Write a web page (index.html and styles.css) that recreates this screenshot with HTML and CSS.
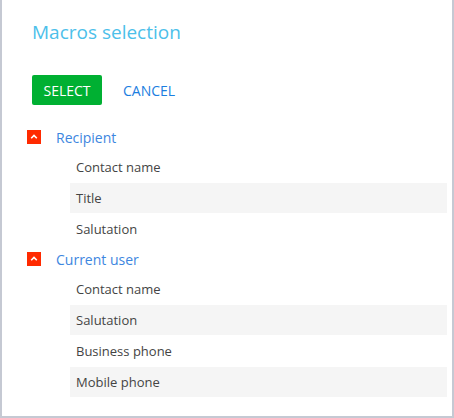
FILE: index.html
```html
<!DOCTYPE html>
<html>
<head>
<meta charset="utf-8">
<link rel="stylesheet" href="styles.css">
</head>
<body>
<div class="dialog">
  <h1 class="title">Macros selection</h1>
  <div class="actions">
    <button class="btn-select">SELECT</button>
    <button class="btn-cancel">CANCEL</button>
  </div>
  <div class="tree">
    <div class="group">
      <div class="group-head">
        <span class="toggle"><svg width="14" height="14" viewBox="0 0 14 14"><path d="M4.2 8.2 L7 5.4 L9.8 8.2" fill="none" stroke="#fff" stroke-width="1.6"/></svg></span>
        <span class="group-name">Recipient</span>
      </div>
      <div class="item">Contact name</div>
      <div class="item alt">Title</div>
      <div class="item">Salutation</div>
    </div>
    <div class="group">
      <div class="group-head">
        <span class="toggle"><svg width="14" height="14" viewBox="0 0 14 14"><path d="M4.2 8.2 L7 5.4 L9.8 8.2" fill="none" stroke="#fff" stroke-width="1.6"/></svg></span>
        <span class="group-name">Current user</span>
      </div>
      <div class="item">Contact name</div>
      <div class="item alt">Salutation</div>
      <div class="item">Business phone</div>
      <div class="item alt">Mobile phone</div>
    </div>
  </div>
</div>
</body>
</html>
```
FILE: styles.css
```css
html, body {
  margin: 0;
  padding: 0;
}
body {
  background: #c5c9d3;
  width: 454px;
  height: 418px;
  overflow: hidden;
  font-family: "Open Sans", "Liberation Sans", sans-serif;
}
.dialog {
  margin-left: 2px;
  width: 450px;
  height: 416px;
  background: #fff;
  box-sizing: border-box;
  padding: 18px 5px 0 25px;
}
.title {
  margin: 0 0 0 5px;
  font-weight: 400;
  font-size: 19px;
  line-height: 28px;
  color: #4cc0ea;
}
.actions {
  display: flex;
  align-items: center;
  margin: 29px 0 0 5px;
  gap: 21px;
}
.btn-select {
  width: 70px;
  height: 30px;
  border: 0;
  border-radius: 2px;
  background: #00b032;
  color: #fff;
  font-family: inherit;
  font-size: 14px;
  padding: 0;
}
.btn-cancel {
  border: 0;
  background: none;
  padding: 0;
  color: #1b7ee0;
  font-family: inherit;
  font-size: 14px;
}
.tree {
  margin-top: 18px;
}
.group-head {
  display: flex;
  align-items: center;
  height: 28px;
  margin-bottom: 1px;
}
.toggle {
  display: block;
  width: 14px;
  height: 14px;
  background: #ff2a00;
  margin-right: 15px;
}
.toggle svg {
  display: block;
}
.group-name {
  color: #3d86e0;
  font-size: 14px;
}
.item {
  height: 30px;
  line-height: 30px;
  margin: 0 0 1px 43px;
  padding-left: 6px;
  font-size: 13px;
  color: #444;
}
.item.alt {
  background: #f5f5f5;
}
```
